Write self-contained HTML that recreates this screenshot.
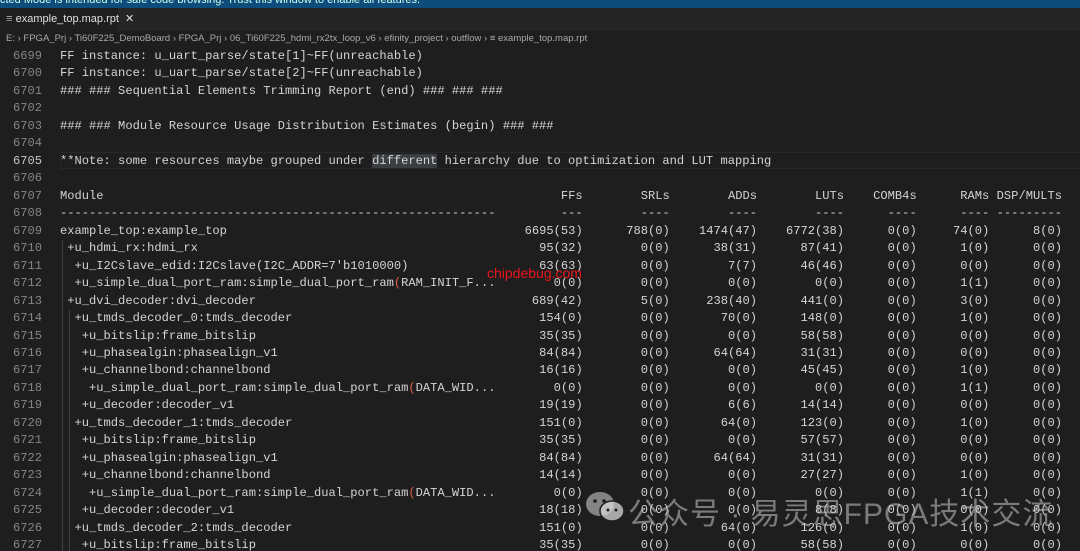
<!DOCTYPE html>
<html><head><meta charset="utf-8"><style>
html,body{margin:0;padding:0;width:1080px;height:551px;overflow:hidden;background:#1e1e1e;}
body{position:relative;font-family:"Liberation Sans",sans-serif;}
.top{position:absolute;left:0;top:0;width:1080px;height:8px;background:#0e4c7c;overflow:hidden;color:#cfe;font-size:11px;line-height:0px;}
.tabs{position:absolute;left:0;top:8px;width:1080px;height:23px;background:#252526;}
.tab{position:absolute;left:0;top:0;width:118px;height:23px;background:#1e1e1e;color:#e0e0e0;font-size:11px;line-height:23px;white-space:nowrap;}
.crumb{position:absolute;left:0;top:31px;width:1080px;height:16px;background:#1e1e1e;color:#a9a9a9;font-size:9.5px;line-height:16px;white-space:nowrap;padding-left:6px;}
.code{position:absolute;left:0;top:48px;width:1080px;height:510px;font-family:"Liberation Mono",monospace;font-size:12.1px;line-height:17.47px;color:#d4d4d4;}
.row{position:absolute;left:0;width:1080px;height:17.47px;}
.ln{position:absolute;left:0;width:42px;text-align:right;color:#858585;}
.tx{position:absolute;left:60px;white-space:pre;}
.row span{position:absolute;text-align:right;white-space:pre;}
.a{right:497.3px}.b{right:410.2px}.c{right:323px}.d{right:236px}.e{right:163.3px}.f{right:90.7px}.g{right:18px}
.cur{position:absolute;left:60px;width:1020px;height:15px;border:1px solid #282828;}
.hl{background:#3a3d41;}
.r{color:#e0624a;}
.guide{position:absolute;width:1px;background:#404040;}
.wm{position:absolute;left:628px;top:489px;font-family:"Liberation Sans","Noto Sans CJK SC",sans-serif;font-size:30px;color:rgba(200,200,200,0.55);white-space:nowrap;letter-spacing:1px;}
.chip{position:absolute;left:487px;top:265px;color:#e8141c;font-family:"Liberation Sans",sans-serif;font-size:14px;}
</style></head><body>
<div class="top">cted Mode is intended for safe code browsing. Trust this window to enable all features.</div>
<div class="tabs"><div class="tab">&nbsp;&nbsp;<span style="color:#aaa">≡</span> example_top.map.rpt&nbsp; ✕</div></div>
<div class="crumb">E: › FPGA_Prj › Ti60F225_DemoBoard › FPGA_Prj › 06_Ti60F225_hdmi_rx2tx_loop_v6 › efinity_project › outflow › ≡ example_top.map.rpt</div>
<div class="code">
<div class="guide" style="left:62px;top:192px;height:320px"></div>
<div class="guide" style="left:69px;top:262px;height:250px"></div>
<div class="cur" style="top:104px"></div>
<div class="row" style="top:0px"><div class="ln">6699</div><div class="tx">FF instance: u_uart_parse/state[1]~FF(unreachable)</div></div>
<div class="row" style="top:17.47px"><div class="ln">6700</div><div class="tx">FF instance: u_uart_parse/state[2]~FF(unreachable)</div></div>
<div class="row" style="top:34.94px"><div class="ln">6701</div><div class="tx">### ### Sequential Elements Trimming Report (end) ### ### ###</div></div>
<div class="row" style="top:52.41px"><div class="ln">6702</div></div>
<div class="row" style="top:69.88px"><div class="ln">6703</div><div class="tx">### ### Module Resource Usage Distribution Estimates (begin) ### ###</div></div>
<div class="row" style="top:87.35px"><div class="ln">6704</div></div>
<div class="row" style="top:104.82px"><div class="ln" style="color:#c6c6c6">6705</div><div class="tx">**Note: some resources maybe grouped under <span class="hl" style="position:static">different</span> hierarchy due to optimization and LUT mapping</div></div>
<div class="row" style="top:122.29px"><div class="ln">6706</div></div>
<div class="row" style="top:139.76px"><div class="ln">6707</div><div class="tx">Module</div><span class="a">FFs</span><span class="b">SRLs</span><span class="c">ADDs</span><span class="d">LUTs</span><span class="e">COMB4s</span><span class="f">RAMs</span><span class="g">DSP/MULTs</span></div>
<div class="row" style="top:157.23px"><div class="ln">6708</div><div class="tx">------------------------------------------------------------</div><span class="a">---</span><span class="b">----</span><span class="c">----</span><span class="d">----</span><span class="e">----</span><span class="f">----</span><span class="g">---------</span></div>
<div class="row" style="top:174.7px"><div class="ln">6709</div><div class="tx">example_top:example_top</div><span class="a">6695(53)</span><span class="b">788(0)</span><span class="c">1474(47)</span><span class="d">6772(38)</span><span class="e">0(0)</span><span class="f">74(0)</span><span class="g">8(0)</span></div>
<div class="row" style="top:192.17px"><div class="ln">6710</div><div class="tx"> +u_hdmi_rx:hdmi_rx</div><span class="a">95(32)</span><span class="b">0(0)</span><span class="c">38(31)</span><span class="d">87(41)</span><span class="e">0(0)</span><span class="f">1(0)</span><span class="g">0(0)</span></div>
<div class="row" style="top:209.64px"><div class="ln">6711</div><div class="tx">  +u_I2Cslave_edid:I2Cslave(I2C_ADDR=7'b1010000)</div><span class="a">63(63)</span><span class="b">0(0)</span><span class="c">7(7)</span><span class="d">46(46)</span><span class="e">0(0)</span><span class="f">0(0)</span><span class="g">0(0)</span></div>
<div class="row" style="top:227.11px"><div class="ln">6712</div><div class="tx">  +u_simple_dual_port_ram:simple_dual_port_ram<b class="r" style="font-weight:normal">(</b>RAM_INIT_F...</div><span class="a">0(0)</span><span class="b">0(0)</span><span class="c">0(0)</span><span class="d">0(0)</span><span class="e">0(0)</span><span class="f">1(1)</span><span class="g">0(0)</span></div>
<div class="row" style="top:244.58px"><div class="ln">6713</div><div class="tx"> +u_dvi_decoder:dvi_decoder</div><span class="a">689(42)</span><span class="b">5(0)</span><span class="c">238(40)</span><span class="d">441(0)</span><span class="e">0(0)</span><span class="f">3(0)</span><span class="g">0(0)</span></div>
<div class="row" style="top:262.05px"><div class="ln">6714</div><div class="tx">  +u_tmds_decoder_0:tmds_decoder</div><span class="a">154(0)</span><span class="b">0(0)</span><span class="c">70(0)</span><span class="d">148(0)</span><span class="e">0(0)</span><span class="f">1(0)</span><span class="g">0(0)</span></div>
<div class="row" style="top:279.52px"><div class="ln">6715</div><div class="tx">   +u_bitslip:frame_bitslip</div><span class="a">35(35)</span><span class="b">0(0)</span><span class="c">0(0)</span><span class="d">58(58)</span><span class="e">0(0)</span><span class="f">0(0)</span><span class="g">0(0)</span></div>
<div class="row" style="top:296.99px"><div class="ln">6716</div><div class="tx">   +u_phasealgin:phasealign_v1</div><span class="a">84(84)</span><span class="b">0(0)</span><span class="c">64(64)</span><span class="d">31(31)</span><span class="e">0(0)</span><span class="f">0(0)</span><span class="g">0(0)</span></div>
<div class="row" style="top:314.46px"><div class="ln">6717</div><div class="tx">   +u_channelbond:channelbond</div><span class="a">16(16)</span><span class="b">0(0)</span><span class="c">0(0)</span><span class="d">45(45)</span><span class="e">0(0)</span><span class="f">1(0)</span><span class="g">0(0)</span></div>
<div class="row" style="top:331.93px"><div class="ln">6718</div><div class="tx">    +u_simple_dual_port_ram:simple_dual_port_ram<b class="r" style="font-weight:normal">(</b>DATA_WID...</div><span class="a">0(0)</span><span class="b">0(0)</span><span class="c">0(0)</span><span class="d">0(0)</span><span class="e">0(0)</span><span class="f">1(1)</span><span class="g">0(0)</span></div>
<div class="row" style="top:349.4px"><div class="ln">6719</div><div class="tx">   +u_decoder:decoder_v1</div><span class="a">19(19)</span><span class="b">0(0)</span><span class="c">6(6)</span><span class="d">14(14)</span><span class="e">0(0)</span><span class="f">0(0)</span><span class="g">0(0)</span></div>
<div class="row" style="top:366.87px"><div class="ln">6720</div><div class="tx">  +u_tmds_decoder_1:tmds_decoder</div><span class="a">151(0)</span><span class="b">0(0)</span><span class="c">64(0)</span><span class="d">123(0)</span><span class="e">0(0)</span><span class="f">1(0)</span><span class="g">0(0)</span></div>
<div class="row" style="top:384.34px"><div class="ln">6721</div><div class="tx">   +u_bitslip:frame_bitslip</div><span class="a">35(35)</span><span class="b">0(0)</span><span class="c">0(0)</span><span class="d">57(57)</span><span class="e">0(0)</span><span class="f">0(0)</span><span class="g">0(0)</span></div>
<div class="row" style="top:401.81px"><div class="ln">6722</div><div class="tx">   +u_phasealgin:phasealign_v1</div><span class="a">84(84)</span><span class="b">0(0)</span><span class="c">64(64)</span><span class="d">31(31)</span><span class="e">0(0)</span><span class="f">0(0)</span><span class="g">0(0)</span></div>
<div class="row" style="top:419.28px"><div class="ln">6723</div><div class="tx">   +u_channelbond:channelbond</div><span class="a">14(14)</span><span class="b">0(0)</span><span class="c">0(0)</span><span class="d">27(27)</span><span class="e">0(0)</span><span class="f">1(0)</span><span class="g">0(0)</span></div>
<div class="row" style="top:436.75px"><div class="ln">6724</div><div class="tx">    +u_simple_dual_port_ram:simple_dual_port_ram<b class="r" style="font-weight:normal">(</b>DATA_WID...</div><span class="a">0(0)</span><span class="b">0(0)</span><span class="c">0(0)</span><span class="d">0(0)</span><span class="e">0(0)</span><span class="f">1(1)</span><span class="g">0(0)</span></div>
<div class="row" style="top:454.22px"><div class="ln">6725</div><div class="tx">   +u_decoder:decoder_v1</div><span class="a">18(18)</span><span class="b">0(0)</span><span class="c">0(0)</span><span class="d">8(8)</span><span class="e">0(0)</span><span class="f">0(0)</span><span class="g">0(0)</span></div>
<div class="row" style="top:471.69px"><div class="ln">6726</div><div class="tx">  +u_tmds_decoder_2:tmds_decoder</div><span class="a">151(0)</span><span class="b">0(0)</span><span class="c">64(0)</span><span class="d">126(0)</span><span class="e">0(0)</span><span class="f">1(0)</span><span class="g">0(0)</span></div>
<div class="row" style="top:489.16px"><div class="ln">6727</div><div class="tx">   +u_bitslip:frame_bitslip</div><span class="a">35(35)</span><span class="b">0(0)</span><span class="c">0(0)</span><span class="d">58(58)</span><span class="e">0(0)</span><span class="f">0(0)</span><span class="g">0(0)</span></div>
</div>
<div class="chip">chipdebug.com</div>
<svg style="position:absolute;left:585px;top:490px" width="42" height="36" viewBox="0 0 42 36">
<ellipse cx="15" cy="14" rx="14" ry="12" fill="rgba(200,200,200,0.6)"/>
<ellipse cx="27" cy="21" rx="12" ry="10" fill="rgba(215,215,215,0.75)" stroke="#1e1e1e" stroke-width="1.5"/>
<circle cx="10" cy="11" r="1.8" fill="#1e1e1e"/><circle cx="19" cy="11" r="1.8" fill="#1e1e1e"/>
<circle cx="23" cy="20" r="1.5" fill="#1e1e1e"/><circle cx="31" cy="20" r="1.5" fill="#1e1e1e"/>
</svg>
<div class="wm">公众号 · 易灵思FPGA技术交流</div>
</body></html>
